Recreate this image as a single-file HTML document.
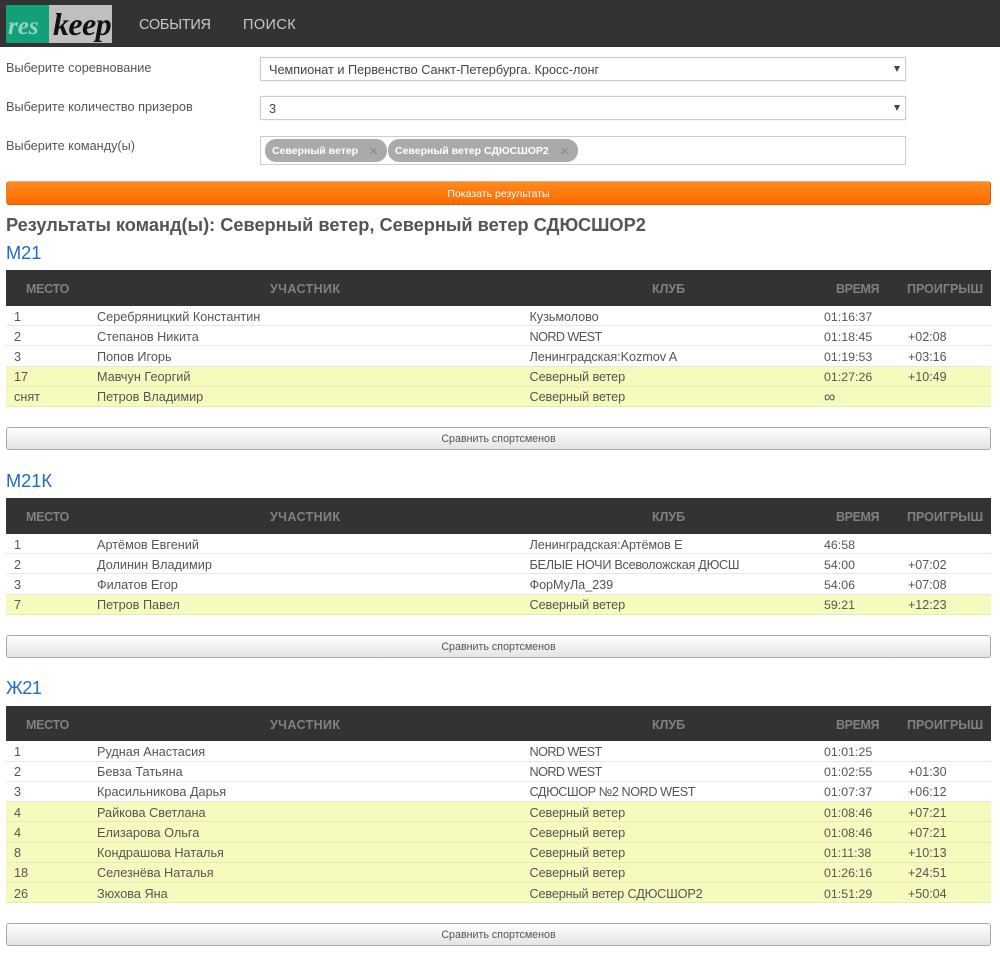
<!DOCTYPE html>
<html lang="ru"><head><meta charset="utf-8"><title>Reskeep</title>
<style>
html,body{margin:0;padding:0;background:#fff}
body{width:1000px;height:957px;position:relative;overflow:hidden;font-family:"Liberation Sans",sans-serif;color:#555}
.a{position:absolute;white-space:nowrap}
.nav{left:0;top:0;width:1000px;height:47px;background:#333}
.navl{top:16px;font-size:14.5px;line-height:18px;color:#c8c8c8}
.lbl{left:6px;font-size:12.7px;line-height:16px;color:#555}
.sel{left:260px;width:644px;height:22px;border:1px solid #ccc;box-shadow:0 0 1px #ccc;background:#fff;font-size:12.7px;line-height:25px;color:#444;text-indent:8px}
.sel i{position:absolute;right:5px;top:8px;width:0;height:0;border-left:3.5px solid transparent;border-right:3.5px solid transparent;border-top:6px solid #444}
.tag{top:139px;height:23px;border-radius:11px;background:#aaa;color:#fff;font-weight:bold;font-size:10.5px;line-height:25px;text-indent:7px}
.tag b{position:absolute;right:9px;top:0;color:#888;font-weight:normal;font-size:15px;text-indent:0}
.orange{left:6px;top:181px;width:983px;height:22px;border:1px solid;border-color:#eca878 #d4600a #d4600a #e08040;border-radius:3px;background:linear-gradient(#ff8a1f,#ff6a00);color:#fff;font-size:10.5px;line-height:24px;text-align:center}
.h{left:6px;top:214px;font-size:18.2px;line-height:23px;font-weight:bold;color:#555}
.t{left:6px;font-size:18.2px;line-height:22px;color:#1f6cc7}
.th{left:6px;width:985px;height:36px;background:#333;color:#808080;font-weight:bold;font-size:12.5px;line-height:38px}
.th span{position:absolute;white-space:nowrap}
.tb{left:6px;width:985px}
.r{position:relative;height:19.22px;border-bottom:1px solid #e6e6e6;font-size:12.7px;line-height:21px;color:#555}
.r.y{background:#f6fabd;border-bottom-color:#e6e8c0}
.r span{position:absolute;top:.5px;white-space:nowrap}
.c1{left:8px}.c2{left:91px}.c3{left:523.5px;letter-spacing:-.08px}.c4{left:818px;font-size:12.4px}.c5{left:902px;font-size:12.5px}
.cmp{left:6px;width:983px;height:21px;border:1px solid #aaa;border-radius:3px;background:linear-gradient(#fff,#e4e4e4);font-size:10.7px;line-height:23px;text-align:center;color:#555}
</style></head><body>
<div class="a nav"></div>
<div class="a" style="left:6px;top:5px;width:43px;height:38px;background:#12a07b"></div>
<div class="a" style="left:49px;top:5px;width:63px;height:38px;background:#bfbfbf"></div>
<div class="a" style="left:8px;top:10px;font:italic bold 25px/34px 'Liberation Serif',serif;color:#93d3bf">res</div>
<div class="a" style="left:53px;top:6px;font:italic bold 32px/36px 'Liberation Serif',serif;color:#111;letter-spacing:-.6px">keep</div>
<div class="a navl" style="left:139px;letter-spacing:-.25px">СОБЫТИЯ</div>
<div class="a navl" style="left:243px;letter-spacing:.4px">ПОИСК</div>

<div class="a lbl" style="top:60px">Выберите соревнование</div>
<div class="a lbl" style="top:99px">Выберите количество призеров</div>
<div class="a lbl" style="top:138px">Выберите команду(ы)</div>
<div class="a sel" style="top:57px">Чемпионат и Первенство Санкт-Петербурга. Кросс-лонг<i></i></div>
<div class="a sel" style="top:96px">3<i></i></div>
<div class="a" style="left:260px;top:136px;width:644px;height:27px;border:1px solid #ccc"></div>
<div class="a tag" style="left:265px;width:122px">Северный ветер<b>×</b></div>
<div class="a tag" style="left:388px;width:190px">Северный ветер СДЮСШОР2<b>×</b></div>
<div class="a orange">Показать результаты</div>
<div class="a h">Результаты команд(ы): Северный ветер, Северный ветер СДЮСШОР2</div>

<div class="a t" style="top:242px">М21</div>
<div class="a th" style="top:270px"><span style="left:20px;letter-spacing:-.3px">МЕСТО</span><span style="left:264px;letter-spacing:.4px">УЧАСТНИК</span><span style="left:646px">КЛУБ</span><span style="left:830px;letter-spacing:-.4px">ВРЕМЯ</span><span style="left:901px">ПРОИГРЫШ</span></div>
<div class="a tb" style="top:306px">
<div class="r"><span class="c1">1</span><span class="c2">Серебряницкий Константин</span><span class="c3">Кузьмолово</span><span class="c4">01:16:37</span></div>
<div class="r"><span class="c1">2</span><span class="c2">Степанов Никита</span><span class="c3" style="letter-spacing:-.6px">NORD WEST</span><span class="c4">01:18:45</span><span class="c5">+02:08</span></div>
<div class="r"><span class="c1">3</span><span class="c2">Попов Игорь</span><span class="c3">Ленинградская:Kozmov A</span><span class="c4">01:19:53</span><span class="c5">+03:16</span></div>
<div class="r y"><span class="c1">17</span><span class="c2">Мавчун Георгий</span><span class="c3">Северный ветер</span><span class="c4">01:27:26</span><span class="c5">+10:49</span></div>
<div class="r y"><span class="c1">снят</span><span class="c2">Петров Владимир</span><span class="c3">Северный ветер</span><span class="c4" style="font-size:16px">∞</span></div>
</div>
<div class="a cmp" style="top:427px">Сравнить спортсменов</div>

<div class="a t" style="top:470px">М21К</div>
<div class="a th" style="top:498px"><span style="left:20px;letter-spacing:-.3px">МЕСТО</span><span style="left:264px;letter-spacing:.4px">УЧАСТНИК</span><span style="left:646px">КЛУБ</span><span style="left:830px;letter-spacing:-.4px">ВРЕМЯ</span><span style="left:901px">ПРОИГРЫШ</span></div>
<div class="a tb" style="top:534px">
<div class="r"><span class="c1">1</span><span class="c2">Артёмов Евгений</span><span class="c3">Ленинградская:Артёмов Е</span><span class="c4">46:58</span></div>
<div class="r"><span class="c1">2</span><span class="c2">Долинин Владимир</span><span class="c3" style="letter-spacing:-.3px">БЕЛЫЕ НОЧИ Всеволожская ДЮСШ</span><span class="c4">54:00</span><span class="c5">+07:02</span></div>
<div class="r"><span class="c1">3</span><span class="c2">Филатов Егор</span><span class="c3">ФорМуЛа_239</span><span class="c4">54:06</span><span class="c5">+07:08</span></div>
<div class="r y"><span class="c1">7</span><span class="c2">Петров Павел</span><span class="c3">Северный ветер</span><span class="c4">59:21</span><span class="c5">+12:23</span></div>
</div>
<div class="a cmp" style="top:635px">Сравнить спортсменов</div>

<div class="a t" style="top:677px;letter-spacing:-.5px">Ж21</div>
<div class="a th" style="top:706px;height:35px"><span style="left:20px;letter-spacing:-.3px">МЕСТО</span><span style="left:264px;letter-spacing:.4px">УЧАСТНИК</span><span style="left:646px">КЛУБ</span><span style="left:830px;letter-spacing:-.4px">ВРЕМЯ</span><span style="left:901px">ПРОИГРЫШ</span></div>
<div class="a tb" style="top:741.5px">
<div class="r"><span class="c1">1</span><span class="c2">Рудная Анастасия</span><span class="c3" style="letter-spacing:-.6px">NORD WEST</span><span class="c4">01:01:25</span></div>
<div class="r"><span class="c1">2</span><span class="c2">Бевза Татьяна</span><span class="c3" style="letter-spacing:-.6px">NORD WEST</span><span class="c4">01:02:55</span><span class="c5">+01:30</span></div>
<div class="r"><span class="c1">3</span><span class="c2">Красильникова Дарья</span><span class="c3" style="letter-spacing:-.45px">СДЮСШОР №2 NORD WEST</span><span class="c4">01:07:37</span><span class="c5">+06:12</span></div>
<div class="r y"><span class="c1">4</span><span class="c2">Райкова Светлана</span><span class="c3">Северный ветер</span><span class="c4">01:08:46</span><span class="c5">+07:21</span></div>
<div class="r y"><span class="c1">4</span><span class="c2">Елизарова Ольга</span><span class="c3">Северный ветер</span><span class="c4">01:08:46</span><span class="c5">+07:21</span></div>
<div class="r y"><span class="c1">8</span><span class="c2">Кондрашова Наталья</span><span class="c3">Северный ветер</span><span class="c4">01:11:38</span><span class="c5">+10:13</span></div>
<div class="r y"><span class="c1">18</span><span class="c2">Селезнёва Наталья</span><span class="c3">Северный ветер</span><span class="c4">01:26:16</span><span class="c5">+24:51</span></div>
<div class="r y"><span class="c1">26</span><span class="c2">Зюхова Яна</span><span class="c3" style="letter-spacing:-.15px">Северный ветер СДЮСШОР2</span><span class="c4">01:51:29</span><span class="c5">+50:04</span></div>
</div>
<div class="a cmp" style="top:923px">Сравнить спортсменов</div>
</body></html>
